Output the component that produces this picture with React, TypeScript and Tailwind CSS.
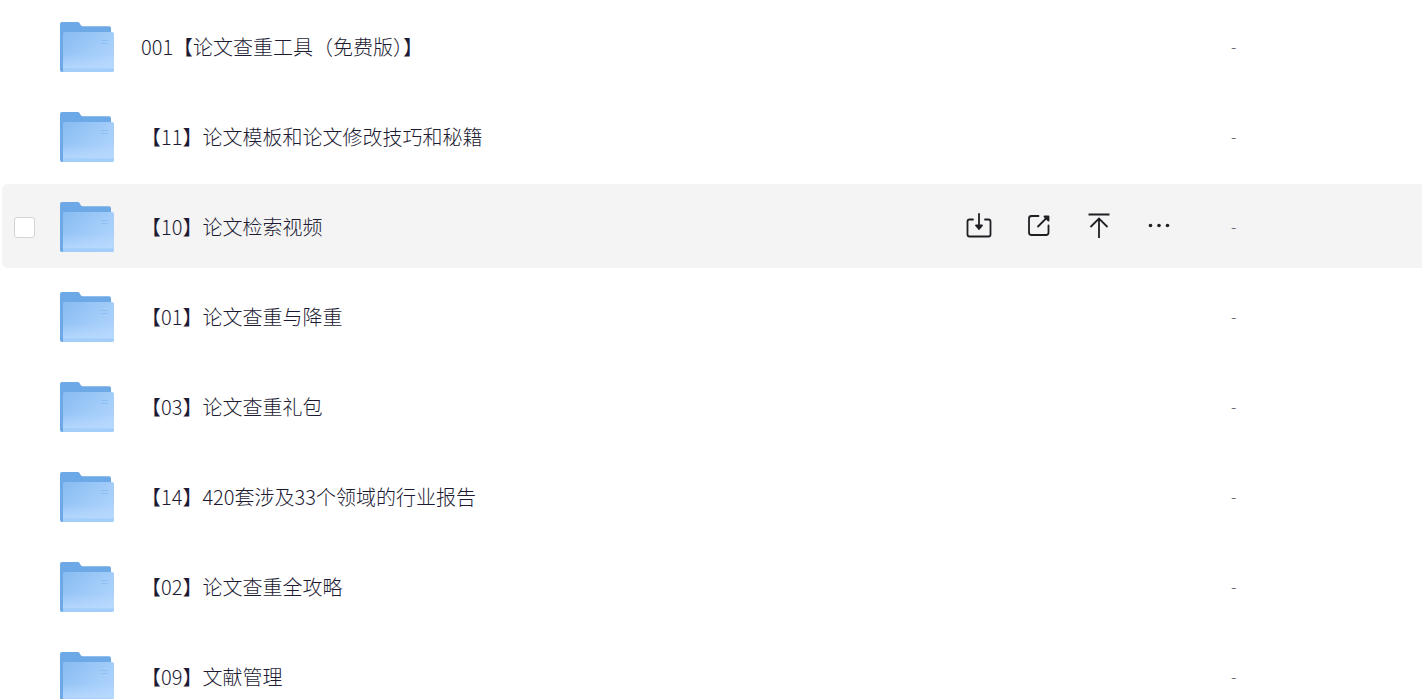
import { useState } from "react";

const FOLDERS = [
  { id: 1, name: "001【论文查重工具（免费版）】", size: "-" },
  { id: 2, name: "【11】论文模板和论文修改技巧和秘籍", size: "-" },
  { id: 3, name: "【10】论文检索视频", size: "-" },
  { id: 4, name: "【01】论文查重与降重", size: "-" },
  { id: 5, name: "【03】论文查重礼包", size: "-" },
  { id: 6, name: "【14】420套涉及33个领域的行业报告", size: "-" },
  { id: 7, name: "【02】论文查重全攻略", size: "-" },
  { id: 8, name: "【09】文献管理", size: "-" },
];

function FolderIcon() {
  return (
    <svg width="54" height="52" viewBox="0 0 54 52" className="shrink-0" aria-hidden="true">
      <defs>
        <linearGradient id="folder-front" x1="0" y1="0.1" x2="1" y2="0.9">
          <stop offset="0" stopColor="#8abdf2" />
          <stop offset="0.55" stopColor="#a2ccf9" />
          <stop offset="1" stopColor="#b3d6fe" />
        </linearGradient>
        <linearGradient id="folder-glow" x1="0" y1="0" x2="0" y2="1">
          <stop offset="0.6" stopColor="#b9dafe" stopOpacity="0" />
          <stop offset="1" stopColor="#b9dafe" stopOpacity="0.8" />
        </linearGradient>
      </defs>
      <path
        d="M2 2h15.5q1.5 0 2.2 1.2l1.3 2.2q.5.8 1.5.8H49q2 0 2 2V30L3 52H2q-2 0-2-2V4q0-2 2-2z"
        fill="#6da9e6"
      />
      <path d="M3 14q0-2 2-2H52q2 0 2 2V50q0 2-2 2H3z" fill="url(#folder-front)" />
      <path d="M3 14q0-2 2-2H52q2 0 2 2V48.500H3z" fill="url(#folder-glow)" />
      <path d="M3 48.500h51V50q0 2-2 2H3z" fill="#a3cefa" />
      <path d="M41 20.500h7M41 23.500h7" stroke="#8fc0f3" strokeWidth="1.200" />
    </svg>
  );
}

const iconProps = {
  width: 30,
  height: 30,
  viewBox: "0 0 30 30",
  fill: "none",
  stroke: "#1f1f24",
  strokeWidth: 1.8,
  strokeLinecap: "round" as const,
  strokeLinejoin: "round" as const,
  "aria-hidden": true,
};

function SaveIcon() {
  return (
    <svg {...iconProps}>
      <path d="M9 8.500H5.500q-2 0-2 2v13q0 2 2 2h19q2 0 2-2v-13q0-2-2-2H21" />
      <path d="M15 3v13" />
      <path d="M12 14.500h6L15 18z" fill="#1f1f24" />
    </svg>
  );
}

function ShareIcon() {
  return (
    <svg {...iconProps}>
      <path d="M14.500 5H7.500q-2.500 0-2.500 2.500v14Q5 24 7.500 24h14.500q2.500 0 2.500-2.500V14.500" />
      <path d="M14 15.500l8.500-8.500" />
      <path d="M20.500 5.500h4v4z" fill="#1f1f24" />
    </svg>
  );
}

function TopIcon() {
  return (
    <svg {...iconProps} strokeLinecap="butt" strokeLinejoin="miter">
      <path d="M4.500 3.500h21M15 27V8M6.500 16L15 7.500l8.500 8.500" />
    </svg>
  );
}

function MoreIcon() {
  return (
    <svg {...iconProps} fill="#1f1f24" stroke="none">
      <circle cx="6.500" cy="14.500" r="1.800" />
      <circle cx="15" cy="14.500" r="1.800" />
      <circle cx="23.500" cy="14.500" r="1.800" />
    </svg>
  );
}

const ACTIONS = [
  { label: "下载", Icon: SaveIcon },
  { label: "分享", Icon: ShareIcon },
  { label: "置顶", Icon: TopIcon },
  { label: "更多", Icon: MoreIcon },
];

export default function App() {
  const [activeId, setActiveId] = useState(3);

  return (
    <main className="h-screen overflow-y-auto bg-white pt-1 pl-0.5 font-['Noto_Sans_CJK_SC',sans-serif] font-light [scrollbar-width:none]">
      <ul className="flex flex-col gap-1.5">
        {FOLDERS.map((folder) => {
          const active = folder.id === activeId;
          return (
            <li
              key={folder.id}
              onMouseEnter={() => setActiveId(folder.id)}
              className={`flex h-21 items-center rounded-l-md pl-3 ${active ? "bg-[#f4f4f4]" : ""}`}
            >
              {/* Select box, only on the active row */}
              <input
                type="checkbox"
                aria-label={folder.name}
                className={`mt-0.5 mr-[25px] size-[21px] shrink-0 appearance-none rounded-[3px] border border-[#d4d4d8] bg-white checked:bg-blue-500 ${
                  active ? "" : "invisible"
                }`}
              />
              <FolderIcon />
              <a href="#" className="ml-[27px] min-w-0 flex-1 truncate text-xl leading-[29px] text-[#1c1b33]">
                {folder.name}
              </a>

              {active && (
                <div className="flex shrink-0">
                  {ACTIONS.map(({ label, Icon }) => (
                    <button
                      key={label}
                      type="button"
                      aria-label={label}
                      className="flex w-15 cursor-pointer items-center justify-center"
                    >
                      <Icon />
                    </button>
                  ))}
                </div>
              )}
              <span className="ml-[42px] w-[191px] shrink-0 text-base leading-6 text-[#55555d]">{folder.size}</span>
            </li>
          );
        })}
      </ul>
    </main>
  );
}
